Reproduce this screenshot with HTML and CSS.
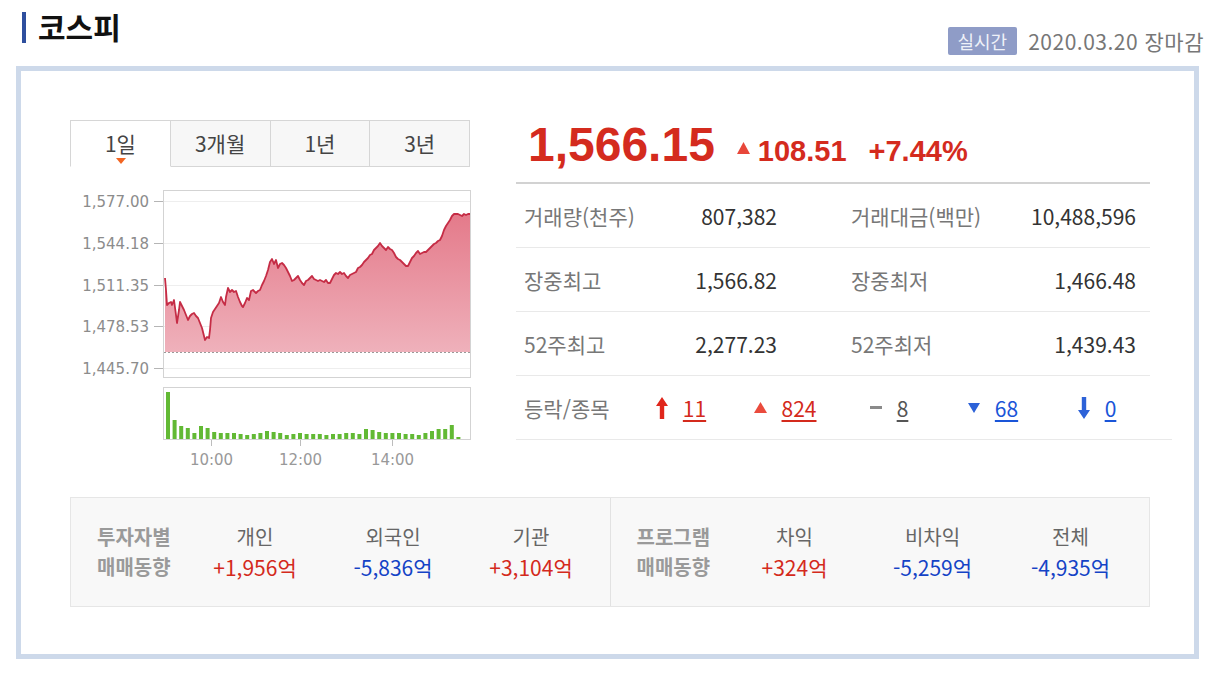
FILE: index.html
```html
<!DOCTYPE html>
<html lang="ko">
<head>
<meta charset="utf-8">
<title>코스피</title>
<link rel="stylesheet" href="styles.css">
</head>
<body>
<div class="header">
  <h1 class="title">코스피</h1>
  <div class="status"><span class="badge">실시간</span><span class="date">2020.03.20 장마감</span></div>
</div>
<div class="box">
  <div class="top">
    <div class="chart-col">
      <ul class="tabs">
        <li class="tab active">1일</li>
        <li class="tab">3개월</li>
        <li class="tab">1년</li>
        <li class="tab">3년</li>
      </ul>
      <svg class="price-chart" width="401" height="188" viewBox="70 190 401 188">
        <defs>
          <linearGradient id="area" x1="0" y1="0" x2="0" y2="1">
            <stop offset="0" stop-color="#e47a8a"/>
            <stop offset="1" stop-color="#efb1bb"/>
          </linearGradient>
        </defs>
        <rect x="163.5" y="190.5" width="307" height="187" fill="#fff" stroke="#d3d3d3"/>
        <g stroke="#eeeeee" stroke-width="1">
          <line x1="164" y1="201.5" x2="470" y2="201.5"/>
          <line x1="164" y1="243.5" x2="470" y2="243.5"/>
          <line x1="164" y1="285.5" x2="470" y2="285.5"/>
          <line x1="164" y1="326.5" x2="470" y2="326.5"/>
          <line x1="164" y1="368.5" x2="470" y2="368.5"/>
        </g>
        <g stroke="#b5b5b5" stroke-width="1">
          <line x1="154" y1="201.5" x2="163" y2="201.5"/>
          <line x1="154" y1="243.5" x2="163" y2="243.5"/>
          <line x1="154" y1="285.5" x2="163" y2="285.5"/>
          <line x1="154" y1="326.5" x2="163" y2="326.5"/>
          <line x1="154" y1="368.5" x2="163" y2="368.5"/>
        </g>
        <g class="axis" text-anchor="end">
          <text x="149" y="206.5">1,577.00</text>
          <text x="149" y="248.5">1,544.18</text>
          <text x="149" y="290.5">1,511.35</text>
          <text x="149" y="331.5">1,478.53</text>
          <text x="149" y="373.5">1,445.70</text>
        </g>
        <path fill="url(#area)" d="M165,278 L166,290 L167,305 L169,303 L171,302 L172,305 L174,300 L176,315 L177,323 L179,310 L180,302 L182,306 L184,310 L186,315 L188,320 L190,316 L192,314 L194,313 L196,316 L198,318 L200,323 L202,328 L204,336 L205,340 L207,337 L209,338 L210,330 L211,318 L213,312 L215,309 L217,306 L219,303 L221,297 L223,302 L225,305 L226,297 L228,288 L230,292 L232,290 L234,292 L236,291 L238,297 L240,302 L242,306 L243,307 L245,303 L247,298 L249,300 L251,291 L253,290 L256,293 L258,291 L260,290 L262,285 L264,281 L266,276 L268,270 L270,262 L272,259 L274,264 L276,260 L278,268 L280,264 L282,263 L284,265 L286,268 L288,272 L290,276 L292,281 L294,280 L296,278 L298,276 L300,280 L302,283 L304,285 L306,281 L308,280 L310,278 L312,276 L314,279 L316,280 L318,281 L320,280 L322,281 L324,282 L326,280 L328,283 L330,283 L332,279 L334,275 L336,273 L338,274 L340,272 L342,274 L344,273 L346,276 L348,278 L350,275 L352,274 L354,273 L356,272 L358,268 L360,267 L362,265 L364,262 L366,260 L368,258 L370,255 L372,254 L374,250 L376,248 L378,246 L380,243 L382,246 L384,248 L386,250 L388,247 L390,249 L392,250 L394,253 L396,257 L398,259 L400,260 L402,262 L404,264 L406,266 L408,266 L410,262 L412,258 L414,256 L416,253 L418,251 L420,254 L422,253 L424,252 L426,252 L428,250 L430,248 L432,246 L434,244 L436,243 L438,241 L440,240 L442,236 L444,230 L446,226 L448,223 L450,220 L452,216 L454,214 L456,214 L458,214 L460,215 L462,216 L464,214 L466,215 L468,214 L470,214 L470,352 L165,352 Z"/>
        <path fill="none" stroke="#c52c45" stroke-width="1.8" stroke-linejoin="round" d="M165,278 L166,290 L167,305 L169,303 L171,302 L172,305 L174,300 L176,315 L177,323 L179,310 L180,302 L182,306 L184,310 L186,315 L188,320 L190,316 L192,314 L194,313 L196,316 L198,318 L200,323 L202,328 L204,336 L205,340 L207,337 L209,338 L210,330 L211,318 L213,312 L215,309 L217,306 L219,303 L221,297 L223,302 L225,305 L226,297 L228,288 L230,292 L232,290 L234,292 L236,291 L238,297 L240,302 L242,306 L243,307 L245,303 L247,298 L249,300 L251,291 L253,290 L256,293 L258,291 L260,290 L262,285 L264,281 L266,276 L268,270 L270,262 L272,259 L274,264 L276,260 L278,268 L280,264 L282,263 L284,265 L286,268 L288,272 L290,276 L292,281 L294,280 L296,278 L298,276 L300,280 L302,283 L304,285 L306,281 L308,280 L310,278 L312,276 L314,279 L316,280 L318,281 L320,280 L322,281 L324,282 L326,280 L328,283 L330,283 L332,279 L334,275 L336,273 L338,274 L340,272 L342,274 L344,273 L346,276 L348,278 L350,275 L352,274 L354,273 L356,272 L358,268 L360,267 L362,265 L364,262 L366,260 L368,258 L370,255 L372,254 L374,250 L376,248 L378,246 L380,243 L382,246 L384,248 L386,250 L388,247 L390,249 L392,250 L394,253 L396,257 L398,259 L400,260 L402,262 L404,264 L406,266 L408,266 L410,262 L412,258 L414,256 L416,253 L418,251 L420,254 L422,253 L424,252 L426,252 L428,250 L430,248 L432,246 L434,244 L436,243 L438,241 L440,240 L442,236 L444,230 L446,226 L448,223 L450,220 L452,216 L454,214 L456,214 L458,214 L460,215 L462,216 L464,214 L466,215 L468,214 L470,214"/>
        <line x1="164" y1="352.5" x2="470" y2="352.5" stroke="#9a9a9a" stroke-dasharray="2,2"/>
      </svg>
      <svg class="vol-chart" width="401" height="83" viewBox="70 387 401 83">
        <rect x="163.5" y="387.5" width="307" height="52" fill="#fff" stroke="#d3d3d3"/>
        <g fill="#62b934">
          <rect x="166" y="392" width="4" height="47"/>
          <rect x="172.6" y="420" width="4" height="19"/>
          <rect x="179.2" y="426" width="4" height="13"/>
          <rect x="185.8" y="428" width="4" height="11"/>
          <rect x="192.4" y="433" width="4" height="6"/>
          <rect x="199" y="426" width="4" height="13"/>
          <rect x="205.6" y="428" width="4" height="11"/>
          <rect x="212.2" y="432" width="4" height="7"/>
          <rect x="218.8" y="433" width="4" height="6"/>
          <rect x="225.4" y="433" width="4" height="6"/>
          <rect x="232" y="433" width="4" height="6"/>
          <rect x="238.6" y="434" width="4" height="5"/>
          <rect x="245.2" y="435" width="4" height="4"/>
          <rect x="251.8" y="434" width="4" height="5"/>
          <rect x="258.4" y="433" width="4" height="6"/>
          <rect x="265" y="431" width="4" height="8"/>
          <rect x="271.6" y="432" width="4" height="7"/>
          <rect x="278.2" y="433" width="4" height="6"/>
          <rect x="284.8" y="435" width="4" height="4"/>
          <rect x="291.4" y="434" width="4" height="5"/>
          <rect x="298" y="433" width="4" height="6"/>
          <rect x="304.6" y="434" width="4" height="5"/>
          <rect x="311.2" y="434" width="4" height="5"/>
          <rect x="317.8" y="434" width="4" height="5"/>
          <rect x="324.4" y="435" width="4" height="4"/>
          <rect x="331" y="434" width="4" height="5"/>
          <rect x="337.6" y="434" width="4" height="5"/>
          <rect x="344.2" y="433" width="4" height="6"/>
          <rect x="350.8" y="433" width="4" height="6"/>
          <rect x="357.4" y="434" width="4" height="5"/>
          <rect x="364" y="429" width="4" height="10"/>
          <rect x="370.6" y="430" width="4" height="9"/>
          <rect x="377.2" y="432" width="4" height="7"/>
          <rect x="383.8" y="433" width="4" height="6"/>
          <rect x="390.4" y="433" width="4" height="6"/>
          <rect x="397" y="433" width="4" height="6"/>
          <rect x="403.6" y="434" width="4" height="5"/>
          <rect x="410.2" y="434" width="4" height="5"/>
          <rect x="416.8" y="435" width="4" height="4"/>
          <rect x="423.4" y="433" width="4" height="6"/>
          <rect x="430" y="431" width="4" height="8"/>
          <rect x="436.6" y="429" width="4" height="10"/>
          <rect x="443.2" y="429" width="4" height="10"/>
          <rect x="449.8" y="425" width="4" height="14"/>
          <rect x="456.4" y="437" width="4" height="2"/>
        </g>
        <g stroke="#bdbdbd">
          <line x1="211.5" y1="440" x2="211.5" y2="446"/>
          <line x1="300.5" y1="440" x2="300.5" y2="446"/>
          <line x1="392.5" y1="440" x2="392.5" y2="446"/>
        </g>
        <g class="axis time" text-anchor="middle">
          <text x="211.5" y="465">10:00</text>
          <text x="300.5" y="465">12:00</text>
          <text x="392.5" y="465">14:00</text>
        </g>
      </svg>
    </div>
    <div class="info-col">
      <div class="price-row">
        <span class="now">1,566.15</span><span class="chg"><svg class="tri-up" width="13" height="12" viewBox="0 0 13 12"><path d="M6.5 0 L13 12 L0 12 Z" fill="#e8473a"/></svg>108.51</span><span class="pct">+7.44%</span>
      </div>
      <div class="row">
        <span class="lbl">거래량(천주)</span><span class="val">807,382</span>
        <span class="lbl2">거래대금(백만)</span><span class="val2">10,488,596</span>
      </div>
      <div class="row">
        <span class="lbl">장중최고</span><span class="val">1,566.82</span>
        <span class="lbl2">장중최저</span><span class="val2">1,466.48</span>
      </div>
      <div class="row">
        <span class="lbl">52주최고</span><span class="val">2,277.23</span>
        <span class="lbl2">52주최저</span><span class="val2">1,439.43</span>
      </div>
      <div class="row updown">
        <span class="lbl ud-lbl">등락/종목</span>
        <span class="cell"><svg width="12" height="22" viewBox="0 0 12 22"><path d="M6 0 L12 9 L8.2 9 L8.2 22 L3.8 22 L3.8 9 L0 9 Z" fill="#e0261b"/></svg><a class="num up">11</a></span>
        <span class="cell"><svg width="13" height="11" viewBox="0 0 13 11"><path d="M6.5 0 L13 11 L0 11 Z" fill="#ea4b3d"/></svg><a class="num up">824</a></span>
        <span class="cell"><svg width="12" height="3" viewBox="0 0 12 3"><rect width="12" height="3" fill="#8a8a8a"/></svg><a class="num flat">8</a></span>
        <span class="cell"><svg width="12" height="10" viewBox="0 0 12 10"><path d="M0 0 L12 0 L6 10 Z" fill="#2d62d8"/></svg><a class="num down">68</a></span>
        <span class="cell"><svg width="12" height="22" viewBox="0 0 12 22"><path d="M3.8 0 L8.2 0 L8.2 13 L12 13 L6 22 L0 13 L3.8 13 Z" fill="#2d62d8"/></svg><a class="num down">0</a></span>
      </div>
    </div>
  </div>
  <div class="trend">
    <div class="half">
      <div class="tlabel">투자자별<br>매매동향</div>
      <div class="tcol"><div class="th">개인</div><div class="tv up">+1,956억</div></div>
      <div class="tcol"><div class="th">외국인</div><div class="tv down">-5,836억</div></div>
      <div class="tcol"><div class="th">기관</div><div class="tv up">+3,104억</div></div>
    </div>
    <div class="half">
      <div class="tlabel">프로그램<br>매매동향</div>
      <div class="tcol"><div class="th">차익</div><div class="tv up">+324억</div></div>
      <div class="tcol"><div class="th">비차익</div><div class="tv down">-5,259억</div></div>
      <div class="tcol"><div class="th">전체</div><div class="tv down">-4,935억</div></div>
    </div>
  </div>
</div>
</body>
</html>
```
FILE: styles.css
```css
html, body {
  margin: 0;
  padding: 0;
  background: #fff;
}
body {
  font-family: "Noto Sans CJK KR", "Noto Sans", sans-serif;
  color: #333;
}
.header {
  display: flex;
  justify-content: space-between;
  height: 66px;
  padding: 0 12px 0 22px;
  box-sizing: border-box;
}
.title {
  margin: 12px 0 0;
  border-left: 4px solid #2e4f9e;
  padding-left: 12px;
  height: 31px;
  line-height: 28px;
  font-size: 30px;
  font-weight: 700;
  color: #111;
  white-space: nowrap;
}
.status {
  align-self: flex-end;
  margin-bottom: 10px;
  display: flex;
  align-items: center;
}
.badge {
  background: #8f9cc7;
  color: #eef1f8;
  font-size: 18px;
  height: 28px;
  line-height: 28px;
  padding: 0 10px;
  border-radius: 2px;
}
.date {
  margin-left: 11px;
  font-size: 21px;
  letter-spacing: 0.5px;
  color: #777;
}
.box {
  margin: 0 17px 0 16px;
  border: 5px solid #cdd9ea;
  height: 593px;
  box-sizing: border-box;
  padding: 49px 44px 0 49px;
}
.top {
  display: flex;
  gap: 45px;
}
.chart-col {
  width: 401px;
  flex: none;
}
.tabs {
  display: flex;
  list-style: none;
  margin: 0;
  padding: 0;
  width: 400px;
}
.tab {
  position: relative;
  flex: 1;
  height: 47px;
  box-sizing: border-box;
  border: 1px solid #d6d6d6;
  border-left: none;
  background: #f7f7f7;
  text-align: center;
  font-size: 21px;
  line-height: 44px;
  color: #444;
}
.tab:first-child {
  border-left: 1px solid #d6d6d6;
}
.tab.active {
  background: #fff;
  border-bottom-color: #fff;
}
.tab.active::after {
  content: "";
  position: absolute;
  left: 45px;
  bottom: 2px;
  border-top: 6px solid #f26522;
  border-left: 5px solid transparent;
  border-right: 5px solid transparent;
}
.price-chart {
  display: block;
  margin-top: 23px;
}
.vol-chart {
  display: block;
  margin-top: 9px;
}
.axis text {
  font-family: "DejaVu Sans", Verdana, sans-serif;
  font-size: 15px;
  fill: #8c8c8c;
}
.axis.time text {
  fill: #999;
}
.info-col {
  width: 634px;
  flex: none;
}
.price-row {
  height: 64px;
  box-sizing: border-box;
  border-bottom: 2px solid #d2d2d2;
  padding: 1px 0 0 12px;
  white-space: nowrap;
  font-family: "Liberation Sans", Arial, sans-serif;
  font-weight: 700;
  color: #d42b1e;
  line-height: 48px;
}
.now {
  font-size: 48px;
}
.chg {
  margin-left: 22px;
  font-size: 29px;
}
.tri-up {
  vertical-align: 7px;
  margin-right: 8px;
}
.pct {
  margin-left: 22px;
  font-size: 29px;
}
.row {
  height: 64px;
  box-sizing: border-box;
  border-bottom: 1px solid #e9e9e9;
  display: flex;
  align-items: center;
  padding: 0 14px 0 8px;
  white-space: nowrap;
}
.lbl {
  width: 116px;
  flex: none;
  font-size: 21px;
  color: #777;
}
.val {
  width: 137px;
  flex: none;
  text-align: right;
  font-size: 21px;
  color: #333;
}
.lbl2 {
  margin-left: 74px;
  flex: none;
  font-size: 21px;
  color: #777;
}
.val2 {
  flex: 1;
  text-align: right;
  font-size: 21px;
  color: #333;
}
.updown {
  margin-right: -22px;
  padding-right: 0;
}
.ud-lbl {
  width: 105px;
}
.cell {
  width: 104px;
  display: flex;
  justify-content: center;
  align-items: center;
  gap: 15px;
}
.num {
  font-size: 21px;
  text-decoration: underline;
  text-underline-offset: 3px;
}
.up {
  color: #d42a1c;
}
.down {
  color: #1443c6;
}
.num.down {
  color: #1a55d8;
}
.flat {
  color: #555;
}
.trend {
  margin-top: 27px;
  height: 110px;
  box-sizing: border-box;
  border: 1px solid #e6e6e6;
  background: #f8f8f8;
  display: flex;
}
.half {
  width: 539px;
  display: flex;
  align-items: center;
}
.half:first-child {
  border-right: 1px solid #e2e2e2;
}
.tlabel {
  padding-left: 26px;
  width: 89px;
  flex: none;
  font-size: 20px;
  font-weight: 700;
  color: #9a9a9a;
  line-height: 30px;
  white-space: nowrap;
}
.tcol {
  width: 138px;
  flex: none;
  text-align: center;
  line-height: 30px;
}
.th {
  font-size: 20px;
  color: #666;
}
.tv {
  font-size: 21px;
}
```
